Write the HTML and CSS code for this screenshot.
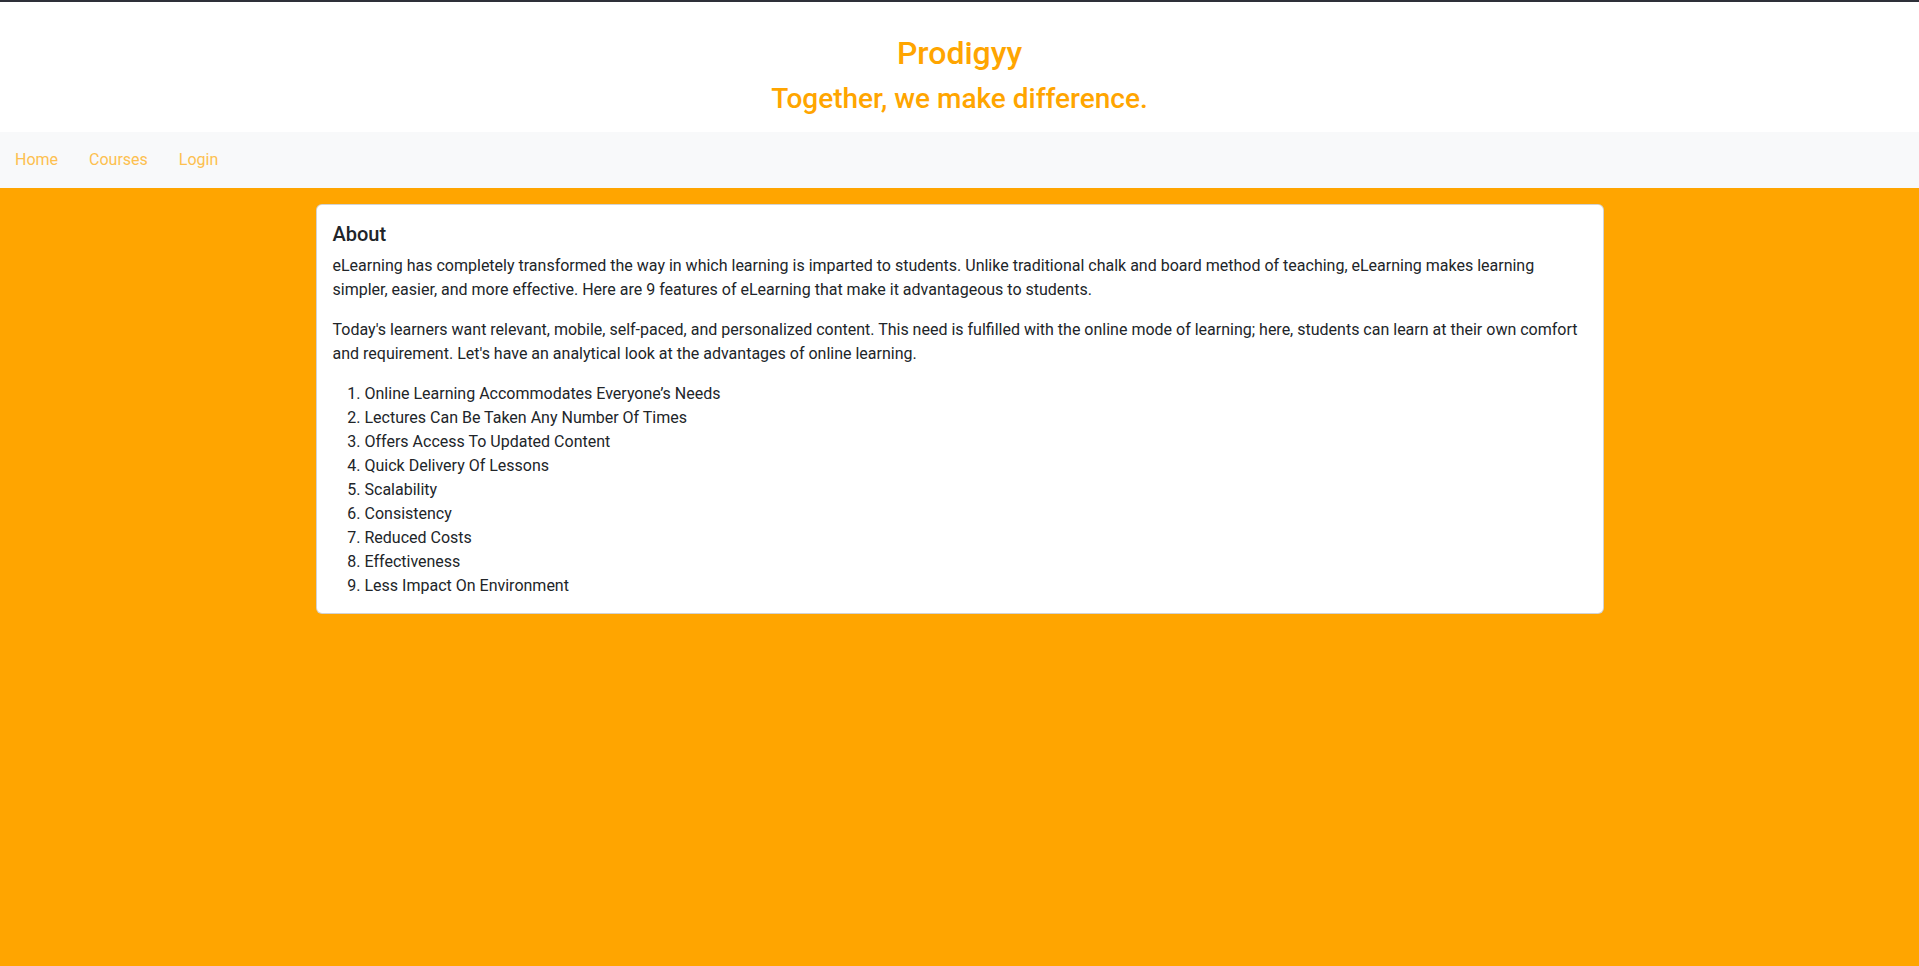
FILE: index.html
```html
<!DOCTYPE html>
<html lang="en">
<head>
<meta charset="utf-8">
<title>Prodigyy</title>
<link rel="stylesheet" href="styles.css">
</head>
<body>
<header class="site-header">
  <h1 class="brand">Prodigyy</h1>
  <h2 class="tagline">Together, we make difference.</h2>
</header>
<nav class="site-nav">
  <a class="nav-link" href="#">Home</a>
  <a class="nav-link" href="#">Courses</a>
  <a class="nav-link" href="#">Login</a>
</nav>
<main class="content">
  <section class="card">
    <h3 class="card-title">About</h3>
    <p>eLearning has completely transformed the way in which learning is imparted to students. Unlike traditional chalk and board method of teaching, eLearning makes learning simpler, easier, and more effective. Here are 9 features of eLearning that make it advantageous to students.</p>
    <p>Today's learners want relevant, mobile, self-paced, and personalized content. This need is fulfilled with the online mode of learning; here, students can learn at their own comfort and requirement. Let's have an analytical look at the advantages of online learning.</p>
    <ol class="features">
      <li>Online Learning Accommodates Everyone’s Needs</li>
      <li>Lectures Can Be Taken Any Number Of Times</li>
      <li>Offers Access To Updated Content</li>
      <li>Quick Delivery Of Lessons</li>
      <li>Scalability</li>
      <li>Consistency</li>
      <li>Reduced Costs</li>
      <li>Effectiveness</li>
      <li>Less Impact On Environment</li>
    </ol>
  </section>
</main>
</body>
</html>
```
FILE: styles.css
```css
* { box-sizing: border-box; }
html, body { margin: 0; padding: 0; }
body {
  background: #ffa500;
  font-family: Roboto, "Liberation Sans", sans-serif;
  font-size: 16px;
  line-height: 1.5;
  color: #212529;
  min-height: 966px;
}
.site-header {
  background: #fff;
  border-top: 2px solid #2e3039;
  text-align: center;
  padding: 32px 0 16px;
  color: #ffa500;
}
.brand { margin: 0; font-size: 32px; font-weight: 500; line-height: 1.2; }
.tagline { margin: 10px 0 0; font-size: 28px; font-weight: 500; line-height: 1.2; }
.site-nav {
  display: flex;
  background: #f8f9fa;
  height: 56px;
  align-items: center;
}
.nav-link { color: #fdc04f; text-decoration: none; padding: 1px 16px 0 15px; }
.content { padding-top: 16px; }
.card {
  width: 1288px;
  margin: 0 auto;
  background: #fff;
  border: 1px solid rgba(0,0,0,.175);
  border-radius: 6px;
  padding: 17px 16px 15px;
}
.card-title { margin: 0 0 8px; font-size: 20px; font-weight: 500; line-height: 1.2; }
.card p { margin: 0 0 16px; }
.features { margin: 0; padding-left: 32px; }
```
